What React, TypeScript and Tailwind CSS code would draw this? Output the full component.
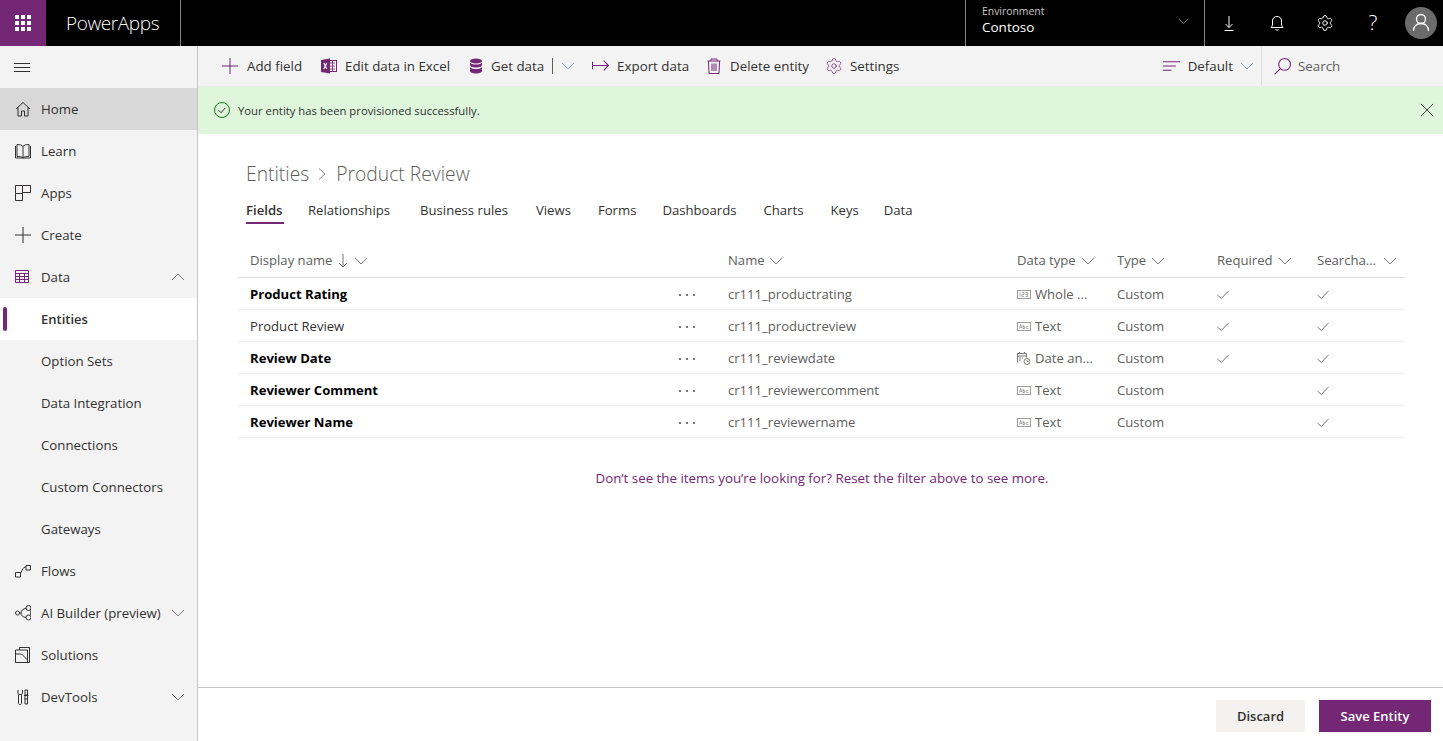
import { ReactNode } from 'react'
import { Settings } from 'lucide-react'

function Ic({ children, size = 16, className = '' }: { children: ReactNode; size?: number; className?: string }) {
  return (
    <svg width={size} height={size} viewBox="0 0 16 16" fill="none" stroke="currentColor" strokeWidth="1" className={`shrink-0 ${className}`}>
      {children}
    </svg>
  )
}

function Chevron({ className = 'text-[#797775]', up = false, width = 14 }: { className?: string; up?: boolean; width?: number }) {
  return (
    <svg width={width} height={width * 0.57} viewBox="0 0 14 8" fill="none" stroke="currentColor" strokeWidth="1" className={`shrink-0 ${className}`}>
      <path d={up ? 'M1 7l6-6 6 6' : 'M1 1l6 6 6-6'} />
    </svg>
  )
}

const purple = 'text-[#742774]'

const navIcons: Record<string, ReactNode> = {
  Home: <Ic><path d="M1 8l7-6.500L15 8M3 6.500V15h3.500v-5h3v5H13V6.500" /></Ic>,
  Learn: <Ic><path d="M.5 3v12h15V3M2 13.500V1.500c2.500 0 5 .5 6 2 1-1.500 3.500-2 6-2v12c-2.500 0-5 0-6 1.500-1-1.500-3.500-1.500-6-1.500zM8 3.500V15" /></Ic>,
  Apps: <Ic><path d="M.5 8.500h7v7h-7zM.5 8.500v-8h7v8M7.500 .5h8v7h-8" /></Ic>,
  Create: <Ic><path d="M8 0v16M0 8h16" /></Ic>,
  Data: <Ic className={purple}><path d="M.5 1.500h13v12H.5zM.5 4.500h13M.5 7.500h13M.5 10.500h13M4.500 4.500v9M9.500 4.500v9" /></Ic>,
  Flows: <Ic><path d="M.5 9.500h5v4.500h-5zM11 2.500h4.500V7H11zM5.500 10.500L8 5.500Q8.500 4 11 4" /></Ic>,
  'AI Builder (preview)': <Ic><circle cx="2.500" cy="8" r="2" /><circle cx="13.500" cy="3" r="2.500" /><circle cx="13.500" cy="12.500" r="2.500" /><path d="M4.500 8H6M11 3.500C8 3.500 6 5.500 6 8s1.500 4 5 4.500M15 5.200c1 1.500 1 3.500 0 5.200" /></Ic>,
  Solutions: <Ic><path d="M.5 7v8.500h14V.5H4.500v2.500h8V15M.5 7V3h4M.5 7h6l6 6" /></Ic>,
  DevTools: <Ic><path d="M3 1v3c0 1 .5 1.500 2 1.500S7.500 5 7.500 4V1M3.500 5.500v9c0 .5.500 1 1.500 1s1.500-.5 1.500-1v-9M10 1h2.500v5H10zM9 6.500h4.500M10 6.500V15h2.500V6.500M9.500 10H13" /></Ic>,
}

const nav = [
  { label: 'Home', active: true },
  { label: 'Learn' },
  { label: 'Apps' },
  { label: 'Create' },
  { label: 'Data', chevron: 'up' },
  { label: 'Entities', selected: true },
  { label: 'Option Sets' },
  { label: 'Data Integration' },
  { label: 'Connections' },
  { label: 'Custom Connectors' },
  { label: 'Gateways' },
  { label: 'Flows' },
  { label: 'AI Builder (preview)', chevron: 'down' },
  { label: 'Solutions' },
  { label: 'DevTools', chevron: 'down' },
]

const tabs = [
  { label: 'Fields', cls: 'w-[38px]' },
  { label: 'Relationships', cls: 'ml-[24px]' },
  { label: 'Business rules', cls: 'ml-[30px]' },
  { label: 'Views', cls: 'ml-[28px]' },
  { label: 'Forms', cls: 'ml-[27px]' },
  { label: 'Dashboards', cls: 'ml-[26px]' },
  { label: 'Charts', cls: 'ml-[27px]' },
  { label: 'Keys', cls: 'ml-[27px]' },
  { label: 'Data', cls: 'ml-[25px]' },
]

const rows = [
  { display: 'Product Rating', bold: true, name: 'cr111_productrating', type: 'Whole ...', icon: 'num', required: true },
  { display: 'Product Review', bold: false, name: 'cr111_productreview', type: 'Text', icon: 'abc', required: true },
  { display: 'Review Date', bold: true, name: 'cr111_reviewdate', type: 'Date an...', icon: 'date', required: true },
  { display: 'Reviewer Comment', bold: true, name: 'cr111_reviewercomment', type: 'Text', icon: 'abc', required: false },
  { display: 'Reviewer Name', bold: true, name: 'cr111_reviewername', type: 'Text', icon: 'abc', required: false },
]

function TypeIcon({ kind }: { kind: string }) {
  if (kind === 'date') {
    return (
      <svg width="14" height="15" viewBox="0 0 14 15" fill="none" stroke="#797775" strokeWidth="1" className="shrink-0">
        <path d="M.5 11.500v-9h9v4M.5 5h9M2.500 1v2M7.500 1v2M2 7h2M2 9h2M5 7h1" />
        <circle cx="10" cy="10.500" r="3" />
        <path d="M10 9v1.500h1.500" />
      </svg>
    )
  }
  return (
    <svg width="14" height="9" viewBox="0 0 14 9" className="shrink-0">
      <rect x=".5" y=".5" width="13" height="8" fill="none" stroke="#a19f9d" />
      {kind === 'num' ? (
        <path d="M3 2.500v4M5 2.500h2v2H5v2h2M8.500 2.500h2v4h-2M8.500 4.500h2" fill="none" stroke="#8a8886" strokeWidth=".7" />
      ) : (
        <path d="M2.500 6.500l1.200-4 1.200 4M3 5.200h1.500M6 2.500v4h1.500v-2H6M11 4.500H9.300v2H11" fill="none" stroke="#8a8886" strokeWidth=".7" />
      )}
    </svg>
  )
}

function Check() {
  return (
    <svg width="12" height="10" viewBox="0 0 12 10" fill="none" stroke="#797775" strokeWidth="1">
      <path d="M.5 5l3.800 3.500L11.500 1" />
    </svg>
  )
}

function Header({ w, label, gap = 'gap-[5px]', children }: { w: string; label: string; gap?: string; children?: ReactNode }) {
  return (
    <div className={`flex items-center text-[#605e5c] ${gap} ${w}`}>
      <span>{label}</span>
      {children}
      <Chevron />
    </div>
  )
}

function Tool({ icon, label, gap, className = '' }: { icon: ReactNode; label: string; gap: string; className?: string }) {
  return (
    <div className={`flex items-center ${gap} ${className}`}>
      {icon}
      <span className="pt-[2px]">{label}</span>
    </div>
  )
}

export default function App() {
  return (
    <div className="flex h-[741px] w-[1443px] flex-col overflow-hidden bg-white font-['Open_Sans',sans-serif] text-[13px] text-[#323130]">
      <header className="flex h-[46px] shrink-0 items-center bg-black text-white">
        <div className="flex h-full w-[46px] items-center justify-center bg-[#742774]">
          <div className="grid grid-cols-3 gap-[2px]">
            {[0, 1, 2, 3, 4, 5, 6, 7, 8].map((i) => (
              <span key={i} className="h-[4px] w-[4px] bg-white" />
            ))}
          </div>
        </div>
        <div className="flex h-full w-[135px] items-center border-r border-[#8a8886] pl-[20px] text-[19px] font-light tracking-[-0.4px]">PowerApps</div>
        <div className="flex-1" />
        <div className="flex h-full w-[240px] items-center justify-between border-x border-[#8a8886] pl-[16px] pr-[15px]">
          <div className="mb-[5px] flex flex-col">
            <span className="text-[10.4px] leading-[14px] text-[#c8c6c4]">Environment</span>
            <span className="text-[13.5px] leading-[19px]">Contoso</span>
          </div>
          <Chevron width={11} className="mb-[4px] text-[#a19f9d]" />
        </div>
        <div className="flex h-full w-[48px] items-center justify-center">
          <Ic><path d="M8 1v11.500M4.500 9L8 12.500 11.500 9M3.500 15.500h9" /></Ic>
        </div>
        <div className="flex h-full w-[48px] items-center justify-center">
          <Ic><path d="M2 12.500h12c-1-1-1.500-2-1.500-3.500V6c0-3-2-4.500-4.500-4.500S3.500 3 3.500 6v3c0 1.500-.5 2.500-1.500 3.500zM6.500 14.500c.5.800 2.500.800 3 0" /></Ic>
        </div>
        <div className="flex h-full w-[48px] items-center justify-center">
          <Settings size={18} strokeWidth={1.3} />
        </div>
        <div className="flex h-full w-[48px] items-center justify-center text-[21px] font-light">?</div>
        <div className="flex h-full w-[46px] items-center pl-[8px]">
          <div className="flex h-[32px] w-[32px] items-center justify-center rounded-full bg-[#6b6b6b]">
            <svg width="18" height="20" viewBox="0 0 18 20" fill="none" stroke="white" strokeWidth="1.300">
              <circle cx="9" cy="6" r="4.500" />
              <path d="M1.500 18c0-4.500 3-7.500 7.500-7.500s7.500 3 7.500 7.500" />
            </svg>
          </div>
        </div>
      </header>

      <div className="flex min-h-0 flex-1">
        <aside className="flex w-[198px] shrink-0 flex-col border-r border-[#c8c6c4] bg-[#f3f3f3] text-[13.25px]">
          <div className="flex h-[42px] items-center pl-[14px]">
            <Ic><path d="M0 4.500h16M0 8.500h16M0 12.500h16" /></Ic>
          </div>
          {nav.map((n) => (
            <div
              key={n.label}
              className={`relative flex h-[42px] items-center pr-[12px] ${n.active ? 'bg-[#d8d8d8]' : ''} ${n.selected ? 'bg-white text-[13px] font-semibold' : ''}`}
            >
              {n.selected && <span className="absolute left-[3px] top-[9px] h-[24px] w-[4px] rounded-sm bg-[#742774]" />}
              <span className="flex w-[41px] justify-center pl-[4px]">{navIcons[n.label]}</span>
              <span className="flex-1 whitespace-nowrap pt-[2px]">{n.label}</span>
              {n.chevron && <Chevron up={n.chevron === 'up'} />}
            </div>
          ))}
        </aside>

        <main className="flex min-w-0 flex-1 flex-col">
          <div className="flex h-[40px] shrink-0 items-center bg-[#f3f3f3] pl-[24px] text-[13.33px]">
            <Tool gap="gap-[9px]" label="Add field" icon={<Ic className={purple}><path d="M8 0v16M0 8h16" /></Ic>} />
            <Tool
              gap="gap-[8px]"
              className="ml-[19px]"
              label="Edit data in Excel"
              icon={
                <svg width="16" height="16" viewBox="0 0 16 16" className="shrink-0">
                  <rect x="7" y="2.500" width="8.500" height="11" fill="none" stroke="#742774" />
                  <path d="M9 5h5M9 8h5M9 11h5M11.500 3v10" stroke="#742774" strokeWidth=".8" />
                  <path d="M0 2l9-1.500v15L0 14z" fill="#742774" />
                  <path d="M2.800 5l3 6M5.800 5l-3 6" stroke="white" strokeWidth="1.200" />
                </svg>
              }
            />
            <Tool
              gap="gap-[8px]"
              className="ml-[19px]"
              label="Get data"
              icon={
                <svg width="14" height="16" viewBox="0 0 14 16" className="shrink-0" fill="#742774">
                  <ellipse cx="7" cy="3" rx="6" ry="2.500" />
                  <path d="M1 4.500c1 1.500 3 2 6 2s5-.5 6-2V7c0 1.500-3 2.500-6 2.500S1 8.500 1 7zM1 9c1 1.500 3 2 6 2s5-.5 6-2v4c0 1.500-3 2.500-6 2.500S1 14.500 1 13z" />
                </svg>
              }
            />
            <span className="ml-[8px] h-[16px] w-px bg-[#605e5c]" />
            <Chevron className="ml-[8px] text-[#8aa4c0]" />
            <Tool gap="gap-[8px]" className="ml-[17px]" label="Export data" icon={<Ic size={17} className={purple}><path d="M.5 4.500v7M.5 8h15M11 3.500L15.500 8 11 12.500" /></Ic>} />
            <Tool gap="gap-[8px]" className="ml-[17px]" label="Delete entity" icon={<Ic className={purple}><path d="M1.500 3h13M5 3V1h6v2M2.500 3l.5 12.500h10L13.500 3M6 5.500v7.500M8 5.500v7.500M10 5.500v7.500" /></Ic>} />
            <Tool gap="gap-[7px]" className="ml-[16px]" label="Settings" icon={<Settings size={18} strokeWidth={1} className={`shrink-0 ${purple}`} />} />
            <div className="flex-1" />
            <div className="flex h-full items-center gap-[8px] pr-[7px]">
              <Ic size={17} className={purple}><path d="M0 3.500h16M0 7.500h12M0 11.500h8" /></Ic>
              <span className="pt-[2px]">Default</span>
              <Chevron className="-ml-[1px] text-[#8aa4c0]" />
            </div>
            <div className="flex h-full w-[182px] items-center gap-[7px] border-l border-[#dcdcdc] pl-[12px] text-[#605e5c]">
              <Ic size={17} className={purple}><circle cx="10" cy="6" r="5.500" /><path d="M6 10l-5.500 5.500" /></Ic>
              <span className="pt-[2px]">Search</span>
            </div>
          </div>

          <div className="flex h-[48px] shrink-0 items-center justify-between bg-[#dff6dd] pl-[16px] pr-[9px]">
            <div className="flex items-center gap-[8px]">
              <svg width="16" height="16" viewBox="0 0 16 16" fill="none" stroke="#107c10" strokeWidth="1">
                <circle cx="8" cy="8" r="7.500" />
                <path d="M4.500 8.200L7 10.700l4.500-5" stroke="#323130" />
              </svg>
              <span className="pt-[2px] text-[11.3px]">Your entity has been provisioned successfully.</span>
            </div>
            <Ic size={14}><path d="M1 1l14 14M15 1L1 15" /></Ic>
          </div>

          <div className="min-h-0 flex-1 pl-[48px] pr-[38px]">
            <div className="mt-[26px] flex items-center text-[#605e5c]">
              <span className="text-[19.3px] leading-[28px] font-light">Entities</span>
              <svg width="10" height="14" viewBox="0 0 10 14" fill="none" stroke="#8a8886" className="ml-[8px] mr-[9px]">
                <path d="M2 1.500l6 5.500-6 5.500" />
              </svg>
              <span className="text-[19.3px] leading-[28px] font-light">Product Review</span>
            </div>
            <div className="mt-[12px] flex text-[13.15px]">
              {tabs.map((t, i) => (
                <div key={t.label} className={`flex h-[24px] items-start border-b-2 pt-[1px] ${t.cls} ${i === 0 ? 'border-[#742774] font-semibold' : 'border-transparent'}`}>
                  {t.label}
                </div>
              ))}
            </div>

            <div className="-ml-[8px] mt-[22px] text-[13.1px]">
              <div className="flex h-[32px] items-center border-b border-[#e1dfdd] pb-[2px] pl-[12px]">
                <Header w="w-[478px]" gap="gap-[6px]" label="Display name">
                  <svg width="10" height="15" viewBox="0 0 10 15" fill="none" stroke="#797775"><path d="M5 1v13M1 10l4 4 4-4" /></svg>
                </Header>
                <Header w="w-[289px]" gap="gap-[4px]" label="Name" />
                <Header w="w-[100px]" label="Data type" />
                <Header w="w-[100px]" label="Type" />
                <Header w="w-[100px]" label="Required" />
                <Header w="w-[88px]" gap="gap-[7px]" label="Searcha..." />
              </div>
              {rows.map((r) => (
                <div key={r.name} className="flex h-[32px] items-center border-b border-[#f3f2f1] pl-[12px] pt-[2px] text-[#605e5c]">
                  <div className={`w-[429px] ${r.bold ? 'font-bold text-black' : 'text-[#323130]'}`}>{r.display}</div>
                  <div className="flex w-[49px] items-center gap-[5px]">
                    <span className="h-[2px] w-[2px] bg-[#797775]" />
                    <span className="h-[2px] w-[2px] bg-[#797775]" />
                    <span className="h-[2px] w-[2px] bg-[#797775]" />
                  </div>
                  <div className="w-[289px]">{r.name}</div>
                  <div className="flex w-[100px] items-center gap-[4px]">
                    <TypeIcon kind={r.icon} />
                    <span>{r.type}</span>
                  </div>
                  <div className="w-[100px]">Custom</div>
                  <div className="w-[100px]">{r.required && <Check />}</div>
                  <div className="w-[88px]"><Check /></div>
                </div>
              ))}
            </div>

            <div className="mt-[31px] pr-[7px] text-center text-[13.33px] text-[#742774]">Don’t see the items you’re looking for? Reset the filter above to see more.</div>
          </div>

          <footer className="flex h-[54px] shrink-0 items-start justify-end gap-[14px] border-t border-[#c8c6c4] pr-[12px] pt-[12px]">
            <button className="h-[32px] w-[89px] bg-[#f3f2f1] pt-[2px] font-semibold">Discard</button>
            <button className="h-[32px] w-[112px] bg-[#742774] pt-[2px] font-semibold text-white">Save Entity</button>
          </footer>
        </main>
      </div>
    </div>
  )
}
